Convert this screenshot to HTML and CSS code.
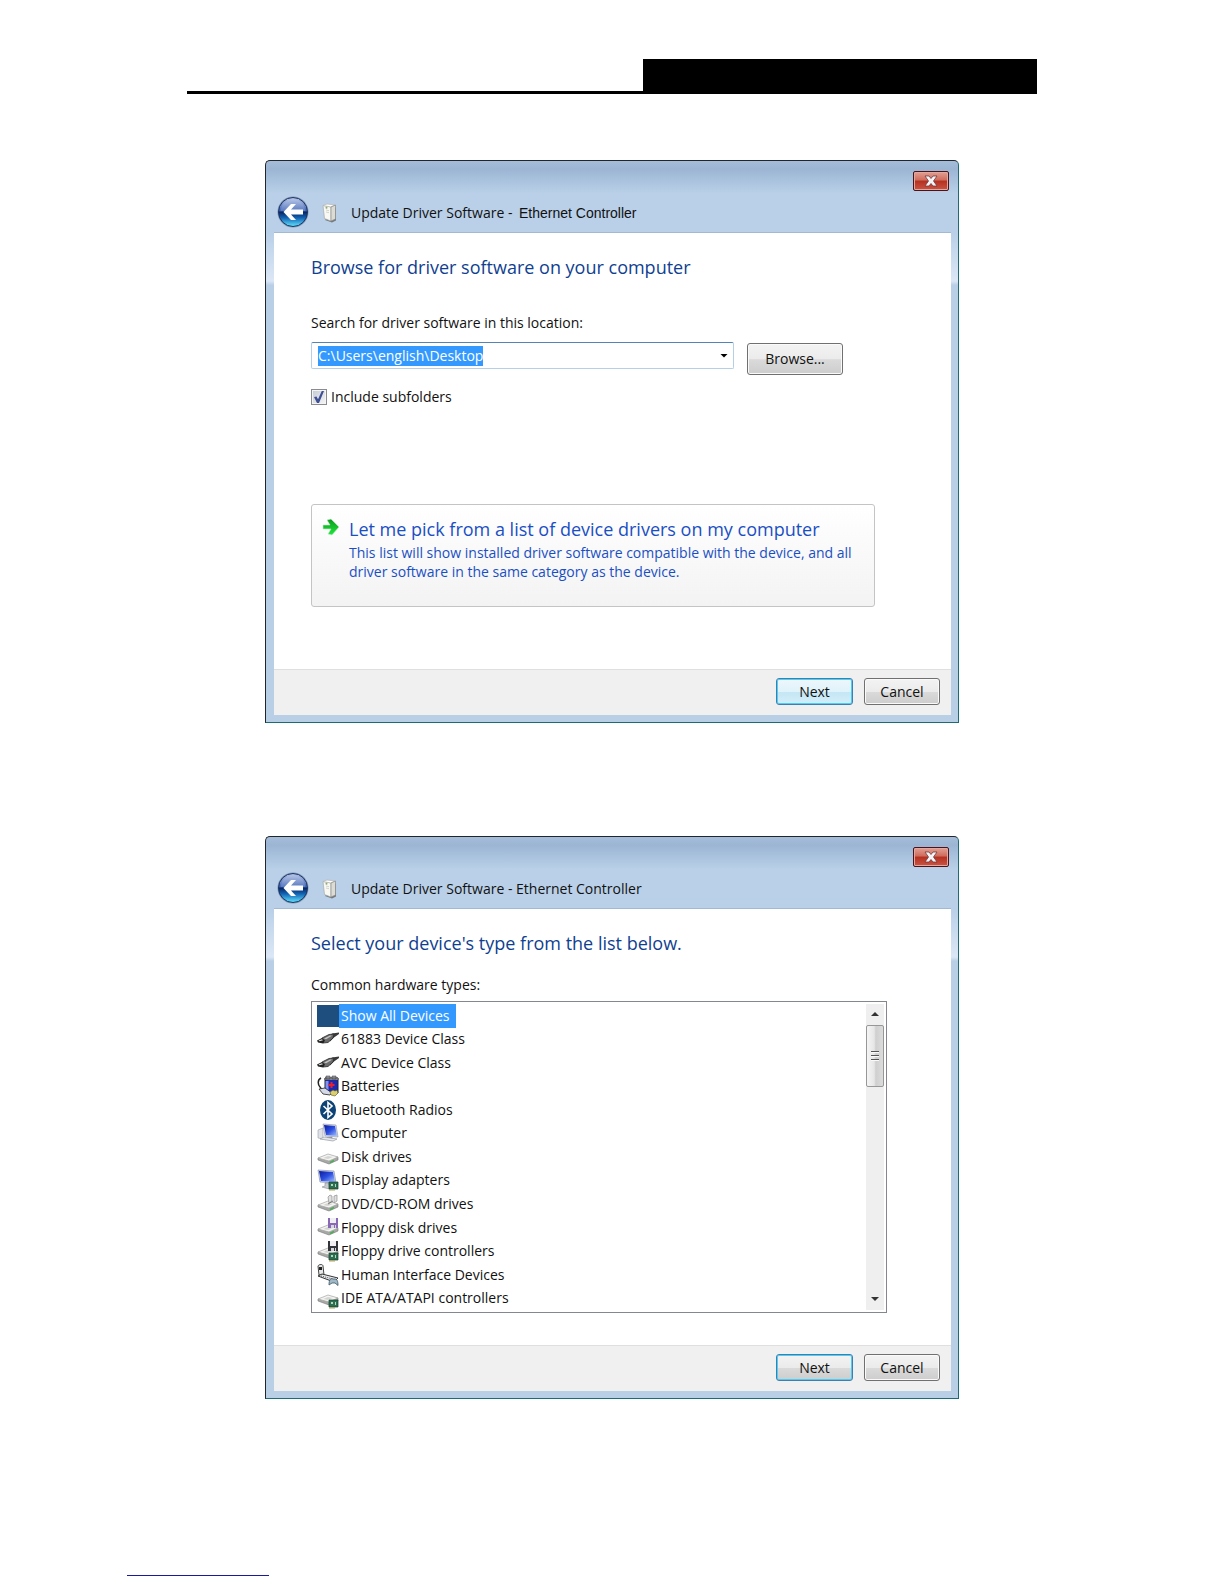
FILE: index.html
```html
<!DOCTYPE html>
<html lang="en">
<head>
    <meta charset="UTF-8">
    <meta name="viewport" content="width=device-width, initial-scale=1.0">
    <title>Update Driver Software</title>
    <link rel="stylesheet" href="styles.css">
</head>
<body>
    <!-- Shared icon shapes -->
    <svg class="defs" width="0" height="0" aria-hidden="true">
        <defs>
            <linearGradient id="orbTop" x1="0" y1="0" x2="0" y2="1">
                <stop offset="0" stop-color="#b4c3e6"/>
                <stop offset="0.46" stop-color="#3f65b6"/>
                <stop offset="0.5" stop-color="#08245f"/>
                <stop offset="0.7" stop-color="#1263b4"/>
                <stop offset="1" stop-color="#62e6ff"/>
            </linearGradient>
            <linearGradient id="screen" x1="0" y1="0" x2="1" y2="1">
                <stop offset="0" stop-color="#0a1a9c"/>
                <stop offset="0.5" stop-color="#2c4fe0"/>
                <stop offset="1" stop-color="#a8c4ff"/>
            </linearGradient>
            <linearGradient id="green" x1="0" y1="0" x2="0" y2="1">
                <stop offset="0" stop-color="#0a9a1c"/>
                <stop offset="1" stop-color="#1fe83c"/>
            </linearGradient>
        </defs>
        <symbol id="back" viewBox="0 0 32 32">
            <circle cx="16" cy="16" r="15.500" fill="#8498b4"/>
            <circle cx="16" cy="16" r="14.500" fill="url(#orbTop)" stroke="#1d3565"/>
            <path d="M4 15a12 12 0 0 1 24 0z" fill="#fff" opacity=".15"/>
            <path d="M14 8 6.500 16l7.500 8h5l-5-5.500H26v-5H14L19 8z" fill="#fff"/>
        </symbol>
        <symbol id="device" viewBox="0 0 16 20">
            <path d="M3 17l7 2.500 4-2V4" fill="#75797c"/>
            <path d="M1 2.500 9 4v14L2.500 15.500z" fill="#f8f8f4" stroke="#a9aaa5" stroke-width=".7"/>
            <path d="M1 2.500 5 1l8 1-4 2z" fill="#fff" stroke="#b5b5b0" stroke-width=".7"/>
            <path d="M9 4 13.500 2v14L9 18z" fill="#dcdcd6" stroke="#8b8c88" stroke-width=".7"/>
            <path d="M4 7l3 .7M4 9l3 .7" stroke="#c9cbc2" stroke-width=".8"/>
            <circle cx="4.500" cy="4.800" r="1" fill="#8cae62"/>
        </symbol>
        <symbol id="close" viewBox="0 0 14 12">
            <path d="M1 1h4l2 2.500L9 1h4L9.500 6l3.500 5H9L7 8.500 5 11H1l3.500-5z" fill="#f5f5f7" stroke="#6e3a3f" stroke-width=".8"/>
        </symbol>
        <symbol id="plug" viewBox="0 0 22 22">
            <path d="M12 9.500 15 5.500 22 4.500v1.500l-5 3.500-4 4z" fill="#3a3a3a"/>
            <path d="M5 10l7-3.500 5-.5-1 4-5 4.500-5 .5z" fill="#6b6b6b" stroke="#2a2a2a" stroke-width=".8"/>
            <path d="M7 10.500 13 7.500l2 .3-6 3.400z" fill="#c4c4c4"/>
            <path d="M0 12.500 5 10l3 2.500-2 3-5-1z" fill="#222"/>
            <path d="M1.500 12.500 5 11.300l1 1-3.500 1z" fill="#ddd"/>
        </symbol>
        <symbol id="battery" viewBox="0 0 22 22">
            <path d="M4 3C0 5 1 10 3 12s1 5 5 5" fill="none" stroke="#222" stroke-width="1.500"/>
            <path d="M8 3h13v15H8z" fill="#1b2ab4" stroke="#222"/>
            <path d="M9 1h4v3H9zM15 1h4v3h-4zM8 3h13v2H8z" fill="#9b9da8" stroke="#333" stroke-width=".5"/>
            <path d="M8.500 6h3v10h-3z" fill="#8090f0"/>
            <path d="M14.500 7v6M11.500 10h6" stroke="#e8202c" stroke-width="2"/>
            <path d="M2 14l6-1 7 5-2 2-7-1z" fill="#d5daea" stroke="#222" stroke-width=".8"/>
            <path d="M13 17l3-2 2 1 2-1 1 3-3 3-4-1z" fill="#d9cf6c" stroke="#5c5620" stroke-width=".6"/>
        </symbol>
        <symbol id="bluetooth" viewBox="0 0 22 22">
            <ellipse cx="11" cy="11" rx="8" ry="10" fill="#0c4275"/>
            <path d="M6.500 7l8.500 8-4 3.500v-15L15 7l-8.500 8" fill="none" stroke="#fff" stroke-width="1.600"/>
        </symbol>
        <symbol id="computer" viewBox="0 0 22 22">
            <path d="M1 8l5-2v11l-5-1z" fill="#dfe2e6" stroke="#999fa8" stroke-width=".6"/>
            <path d="M6 2l13 1 2 12-13-1z" fill="#d5dbe8" stroke="#8891a5" stroke-width=".6"/>
            <path d="M7 3l11 1 2 10-11-1z" fill="url(#screen)"/>
            <path d="M10 15h5l1 2h-6z" fill="#8993a4"/>
            <path d="M3 17l4-2 13 2-4 2z" fill="#e6e8ec" stroke="#959ba4" stroke-width=".7"/>
        </symbol>
        <symbol id="drive" viewBox="0 0 22 22">
            <path d="M1 12v2l11 4 9-4v-3z" fill="#a6a9a6" stroke="#777" stroke-width=".6"/>
            <path d="M1 12l10-4 10 3-9 4z" fill="#f4f4f2" stroke="#a3a3a1" stroke-width=".7"/>
            <path d="M6 12l5-2 5 1-5 2z" fill="#d5d6d4"/>
            <path d="M13 16.500l4-2" stroke="#4cae55" stroke-width="1.500"/>
        </symbol>
        <symbol id="card" viewBox="0 0 22 22">
            <path d="M12 13h9v7h-9z" fill="#2c6f52" stroke="#173d2d" stroke-width=".7"/>
            <path d="M14 15h2v2h-2zM18 15h1v3h-1z" fill="#b5d6b9"/>
            <path d="M13 20v2M15 20v2M17 20v2" stroke="#a58c2c" stroke-width=".8"/>
        </symbol>
        <symbol id="monitor" viewBox="0 0 22 22">
            <path d="M1 1l16 1 2 12-16-1z" fill="#cfd7ea" stroke="#7984a1" stroke-width=".6"/>
            <path d="M2 2l14 1 2 10-14-1z" fill="url(#screen)"/>
            <path d="M8 14h4v2l5 2-5 2-7-2 3-1z" fill="#c8ccd1" stroke="#8a8f96" stroke-width=".6"/>
        </symbol>
        <symbol id="disc" viewBox="0 0 22 22">
            <path d="M11 4l2-2 2 1v5l-3 2zM17 3l3-1v6l-3 2z" fill="#dfe0df" stroke="#8d8f8d" stroke-width=".7"/>
            <path d="M11 11l5-3" stroke="#777"/>
        </symbol>
        <symbol id="floppy" viewBox="0 0 22 22">
            <path d="M11 1h10v10H11z" fill="currentColor"/>
            <path d="M13 1h6v5h-6z" fill="#f0f0f4"/>
            <path d="M14 8h5v3h-5z" fill="#d6d6dc"/>
            <path d="M17 8h1v3h-1z" fill="currentColor"/>
        </symbol>
        <symbol id="hid" viewBox="0 0 22 22">
            <path d="M1 2c1-2 5-2 5 0l1 9H2z" fill="#e8e8e8" stroke="#444"/>
            <path d="M2 3h3v3H2z" fill="#222"/>
            <path d="M1 12l4-2 16 4-4 4z" fill="#e8eaec" stroke="#333"/>
            <path d="M4 12l12 3" stroke="#555" stroke-dasharray="1 1"/>
            <path d="M12 21c0-6 2-7 4-6h2c2 0 3 2 3 6.500l-3-2.500h-3z" fill="#9fb9c8" stroke="#3f5563" stroke-width=".8"/>
        </symbol>
    </svg>

    <header class="page-header">
        <div class="header-tab"></div>
    </header>

    <main>
        <section class="window">
            <div class="titlebar">
                <button class="back-btn" aria-label="Back"><svg width="32" height="32"><use href="#back"/></svg></button>
                <svg class="device-icon" width="16" height="20"><use href="#device"/></svg>
                <span class="title">Update Driver Software - <span class="arial">Ethernet Controller</span></span>
                <button class="close-btn" aria-label="Close"><svg width="14" height="12"><use href="#close"/></svg></button>
            </div>
            <div class="content">
                <h1>Browse for driver software on your computer</h1>
                <label class="field-label" for="location">Search for driver software in this location:</label>
                <div class="location-row">
                    <div class="combo">
                        <input type="text" id="location" value="C:\Users\english\Desktop" spellcheck="false">
                        <button class="combo-btn" aria-label="Show locations"></button>
                    </div>
                    <button class="btn browse-btn">Browse...</button>
                </div>
                <label class="check"><input type="checkbox" checked> Include subfolders</label>
                <button class="command-link">
                    <svg width="18" height="18" viewBox="0 0 18 18"><path d="M1 7h7L5 2l4-1 8 8-7 8-4-1 3-5H1z" fill="url(#green)" stroke="#c9e8cc" stroke-width=".6"/></svg>
                    <span>
                        <span class="command-title">Let me pick from a list of device drivers on my computer</span>
                        <span class="command-text">This list will show installed driver software compatible with the device, and all driver software in the same category as the device.</span>
                    </span>
                </button>
            </div>
            <div class="actions">
                <button class="btn primary glow">Next</button>
                <button class="btn">Cancel</button>
            </div>
        </section>

        <section class="window">
            <div class="titlebar">
                <button class="back-btn" aria-label="Back"><svg width="32" height="32"><use href="#back"/></svg></button>
                <svg class="device-icon" width="16" height="20"><use href="#device"/></svg>
                <span class="title">Update Driver Software - Ethernet Controller</span>
                <button class="close-btn" aria-label="Close"><svg width="14" height="12"><use href="#close"/></svg></button>
            </div>
            <div class="content">
                <h1>Select your device's type from the list below.</h1>
                <div class="list-label" id="typesLabel">Common hardware types:</div>
                <div class="listbox">
                    <ul role="listbox" aria-labelledby="typesLabel">
                        <li role="option" class="selected" aria-selected="true"><i class="blank"></i><span>Show All Devices</span></li>
                        <li role="option"><svg><use href="#plug"/></svg><span>61883 Device Class</span></li>
                        <li role="option"><svg><use href="#plug"/></svg><span>AVC Device Class</span></li>
                        <li role="option"><svg><use href="#battery"/></svg><span>Batteries</span></li>
                        <li role="option"><svg><use href="#bluetooth"/></svg><span>Bluetooth Radios</span></li>
                        <li role="option"><svg><use href="#computer"/></svg><span>Computer</span></li>
                        <li role="option"><svg><use href="#drive"/></svg><span>Disk drives</span></li>
                        <li role="option"><svg><use href="#monitor"/><use href="#card"/></svg><span>Display adapters</span></li>
                        <li role="option"><svg><use href="#drive"/><use href="#disc"/></svg><span>DVD/CD-ROM drives</span></li>
                        <li role="option"><svg class="purple"><use href="#drive"/><use href="#floppy"/></svg><span>Floppy disk drives</span></li>
                        <li role="option"><svg><use href="#drive"/><use href="#floppy"/><use href="#card"/></svg><span>Floppy drive controllers</span></li>
                        <li role="option"><svg><use href="#hid"/></svg><span>Human Interface Devices</span></li>
                        <li role="option"><svg><use href="#drive"/><use href="#card"/></svg><span>IDE ATA/ATAPI controllers</span></li>
                    </ul>
                    <div class="scrollbar" aria-hidden="true">
                        <i class="arrow up"></i>
                        <div class="thumb"></div>
                        <i class="arrow down"></i>
                    </div>
                </div>
            </div>
            <div class="actions">
                <button class="btn primary">Next</button>
                <button class="btn">Cancel</button>
            </div>
        </section>
    </main>

    <footer class="page-footer"><a href="#" aria-label="Page link"></a></footer>

    <script>
        // Start with the whole path selected
        const locationInput = document.getElementById('location');
        locationInput.focus();
        locationInput.select();
    </script>
</body>
</html>
```
FILE: styles.css
```css
* {
    box-sizing: border-box;
}
body {
    margin: 0;
    background-color: #fff;
    color: #111;
    font-family: "Open Sans", "Noto Sans", sans-serif;
    font-size: 14px;
    line-height: 20px;
}
button, input {
    font: inherit;
    color: inherit;
    margin: 0;
    padding: 0;
}
svg {
    display: block;
    flex: none;
}
.defs {
    position: absolute;
}
.page-header {
    max-width: 850px;
    margin: 59px auto 66px;
    border-bottom: 3px solid #000;
}
.header-tab {
    width: 394px;
    height: 32px;
    margin-left: auto;
    background-color: #000;
}
.window {
    display: flex;
    flex-direction: column;
    max-width: 694px;
    min-height: 563px;
    margin: 0 auto 113px;
    padding: 0 7px 7px 8px;
    border: 1px solid;
    border-color: #20252e #1d6b75 #1d6b75 #20252e;
    border-radius: 5px 5px 0 0;
    background: linear-gradient(#a5bdd9 0, #9bb5d3 8px, #b9d0e8 32px, #b9d0e8 72px, #dce7f6 120px, #b9cfe6 124px);
}
.titlebar {
    display: flex;
    align-items: flex-end;
    height: 72px;
    padding: 0 0 4px 3px;
    border-bottom: 1px solid #a3b8d2;
}
.back-btn, .combo-btn {
    border: 0;
    background: none;
}
.device-icon {
    margin: 0 13px 5px 13px;
}
.title {
    padding-bottom: 5px;
}
.arial {
    padding-left: 3px;
    font-family: "Liberation Sans", Arial, sans-serif;
}
.close-btn {
    display: flex;
    align-items: center;
    justify-content: center;
    align-self: flex-start;
    width: 36px;
    height: 20px;
    margin: 10px 2px 0 auto;
    border: 1px solid #4b1219;
    border-radius: 2px;
    background: linear-gradient(#e2a093, #cf6b5c 45%, #b5301f 50%, #cb5443);
    box-shadow: inset 0 0 0 1px #e3a79d;
}
.content {
    flex: 1;
    padding: 22px 37px 0;
    background-color: #fff;
}
h1 {
    margin: 0;
    color: #103f91;
    font-size: 18px;
    font-weight: 400;
    line-height: 24px;
}
.field-label {
    display: block;
    margin-top: 34px;
}
.location-row {
    display: flex;
    align-items: flex-start;
    gap: 13px;
    margin-top: 9px;
}
.combo {
    display: flex;
    flex: 0 1 423px;
    align-items: center;
    height: 27px;
    padding: 0 1px 0 6px;
    border: 1px solid #b5cfe7;
    border-top-color: #5384b5;
    border-radius: 2px;
}
.combo input {
    flex: 1;
    min-width: 0;
    height: 20px;
    border: 0;
    outline: 0;
}
.combo input::selection {
    background-color: #3399ff;
    color: #fff;
}
.combo-btn {
    width: 16px;
    height: 20px;
}
.combo-btn::before {
    content: "";
    display: block;
    margin: 0 auto;
    width: 8px;
    height: 4px;
    background-color: #000;
    clip-path: polygon(0 0, 100% 0, 50% 100%);
}
.btn {
    width: 76px;
    height: 27px;
    border: 1px solid #707070;
    border-radius: 3px;
    background: linear-gradient(#f3f3f3, #ebebeb 50%, #dadada 52%, #cdcdcd);
    box-shadow: inset 0 0 0 1px #fafafa;
}
.browse-btn {
    width: 96px;
    height: 32px;
    margin-top: 1px;
}
.btn.primary {
    width: 77px;
    border-color: #3c7fb1;
    box-shadow: inset 0 0 0 1px #4fcdf3;
}
.btn.glow {
    background: linear-gradient(#edf7fc, #e0f2fa 50%, #c5e6f4 52%, #d3eefa);
}
.check {
    display: flex;
    align-items: center;
    gap: 4px;
    margin-top: 12px;
}
.check input {
    appearance: none;
    width: 16px;
    height: 16px;
    border: 1px solid #8a8b8e;
    background: linear-gradient(135deg, #c4c9d3, #f6f6f6);
    box-shadow: inset 0 0 0 1px #f4f4f4;
}
.check input:checked::before {
    content: "";
    display: block;
    width: 10px;
    height: 12px;
    margin: 1px 2px;
    background-color: #3e4f95;
    clip-path: polygon(0 50%, 25% 45%, 40% 68%, 78% 0, 100% 0, 50% 100%, 30% 100%);
}
.command-link {
    display: flex;
    gap: 9px;
    width: 100%;
    max-width: 564px;
    min-height: 103px;
    margin-top: 97px;
    padding: 12px 16px 12px 10px;
    border: 1px solid #c4c4c4;
    border-radius: 3px;
    background: linear-gradient(#fff, #f3f3f3);
    color: #1a4fc4;
    text-align: left;
}
.command-link svg {
    margin-top: 1px;
}
.command-title, .command-text {
    display: block;
}
.command-title {
    margin-bottom: 2px;
    font-size: 18px;
    line-height: 24px;
}
.command-text {
    line-height: 19px;
}
.actions {
    display: flex;
    justify-content: flex-end;
    gap: 11px;
    padding: 8px 11px 10px;
    border-top: 1px solid #dfdfdf;
    background-color: #f0f0f0;
}
.list-label {
    margin-top: 20px;
}
.listbox {
    display: flex;
    max-width: 576px;
    height: 312px;
    margin-top: 6px;
    padding: 2px 2px 2px 5px;
    border: 1px solid #828790;
}
.listbox ul {
    display: flex;
    flex: 1;
    flex-direction: column;
    margin: 0;
    padding: 0;
    list-style: none;
}
.listbox li {
    display: flex;
    flex: 1;
    align-items: center;
    min-height: 0;
}
.listbox li svg, .blank {
    width: 22px;
    height: 22px;
    color: #33353a;
}
.listbox li svg.purple {
    color: #8b68b5;
}
.listbox li span {
    padding: 2px 6px 2px 2px;
}
.blank {
    background-color: #1d4e7e;
}
.selected span {
    background-color: #3399ff;
    color: #fff;
}
.scrollbar {
    display: flex;
    flex-direction: column;
    align-items: center;
    width: 18px;
    background-color: #efefef;
}
.arrow {
    width: 8px;
    height: 4px;
    margin: 8px 0 9px;
    background-color: #333;
}
.up {
    clip-path: polygon(50% 0, 100% 100%, 0 100%);
}
.down {
    margin-top: auto;
    clip-path: polygon(0 0, 100% 0, 50% 100%);
}
.thumb {
    display: flex;
    align-items: center;
    justify-content: center;
    width: 18px;
    height: 62px;
    border: 1px solid #979797;
    border-radius: 2px;
    background: linear-gradient(90deg, #f5f5f5, #e6e6e6 45%, #cfcfcf 55%, #dcdcdc);
}
.thumb::before {
    content: "";
    width: 8px;
    height: 10px;
    background: repeating-linear-gradient(#555 0, #555 1px, #fafafa 1px, #fafafa 2px, transparent 2px, transparent 4px);
}
.page-footer {
    padding: 0 127px 8px;
}
.page-footer a {
    display: block;
    width: 142px;
    height: 64px;
    border-bottom: 1px solid #1a1a9c;
}
```
